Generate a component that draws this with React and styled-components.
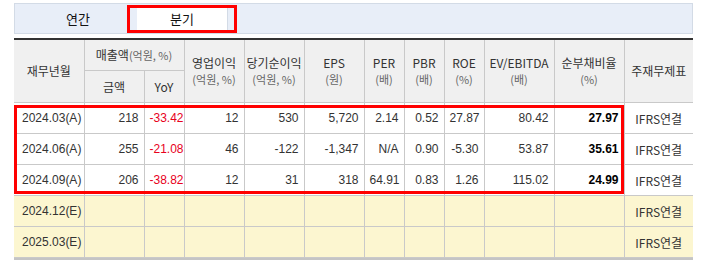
import React from 'react';
import styled, { createGlobalStyle } from 'styled-components';

const GlobalStyle = createGlobalStyle`
body {
    margin: 0;
    background: #fff;
    font-family: "Noto Sans CJK KR", "Liberation Sans", sans-serif;
    color: #333;
}
`;

const Page = styled.div`
    width: 679px;
    padding: 3px 0 0 14px;
`;

const TabBar = styled.div`
    display: flex;
    align-items: center;
    gap: 14px;
    height: 29px;
    padding-left: 18px;
    background: #e8eef8;
    border: 1px solid #d3dbe6;
`;

const Tab = styled.div`
    position: relative;
    width: 90px;
    height: 23px;
    display: flex;
    align-items: center;
    justify-content: center;
    font-size: 13px;
    color: #111;
    background: ${props => props.active ? '#fff' : 'transparent'};
    border-right: ${props => props.active ? '1px solid #d3dbe6' : 'none'};

    &::after {
        content: '';
        display: ${props => props.active ? 'block' : 'none'};
        position: absolute;
        top: -2px;
        bottom: -3px;
        left: -10px;
        right: -10px;
        border: 3px solid #ff0000;
    }
`;

const TableWrap = styled.div`
    position: relative;
    margin-top: 4px;
    border-top: 2px solid #333;
    border-bottom: 2px solid #c4c4c4;
`;

const Table = styled.table`
    width: 679px;
    border-collapse: collapse;
    table-layout: fixed;
`;

const Th = styled.th`
    height: ${props => props.h || 30}px;
    padding: 0;
    background: #f0f0f0;
    border: 1px solid #c9c9c9;
    border-top: none;
    font-weight: normal;
    font-size: 12px;
    line-height: 16px;
    color: #333;
    text-align: center;
    &:first-child { border-left: none; }
    &:last-child { border-right: none; }
`;

const Unit = styled.span`
    display: ${props => props.inline ? 'inline' : 'block'};
    font-size: 11px;
    color: #666;
`;

const Tr = styled.tr`
    background: ${props => props.estimate ? '#fcf6d0' : '#fff'};
`;

const Td = styled.td`
    height: 30px;
    padding: 0 5px;
    border: 1px solid #c9c9c9;
    font-family: "Liberation Sans", "Noto Sans CJK KR", sans-serif;
    font-size: 12px;
    text-align: ${props => props.align || 'right'};
    color: ${props => props.neg ? '#e8001c' : props.strong ? '#000' : '#333'};
    font-weight: ${props => props.strong ? 'bold' : 'normal'};
    white-space: nowrap;
    &:first-child { border-left: none; padding-left: 8px; }
    &:last-child {
        border-right: none;
        font-family: "Noto Sans CJK KR", sans-serif;
    }
`;

const RedBox = styled.div`
    position: absolute;
    left: 0;
    top: 65px;
    width: 610px;
    height: 89px;
    box-sizing: border-box;
    border: 3px solid #ff0000;
    pointer-events: none;
`;

const widths = [70, 60, 40, 60, 60, 60, 40, 40, 40, 70, 70, 69];

const rows = [
    { date: '2024.03(A)', vals: ['218', '-33.42', '12', '530', '5,720', '2.14', '0.52', '27.87', '80.42', '27.97'] },
    { date: '2024.06(A)', vals: ['255', '-21.08', '46', '-122', '-1,347', 'N/A', '0.90', '-5.30', '53.87', '35.61'] },
    { date: '2024.09(A)', vals: ['206', '-38.82', '12', '31', '318', '64.91', '0.83', '1.26', '115.02', '24.99'] },
    { date: '2024.12(E)', vals: Array(10).fill(''), estimate: true },
    { date: '2025.03(E)', vals: Array(10).fill(''), estimate: true },
];

export default function App() {
    return (
        <Page>
            <GlobalStyle />
            <TabBar>
                <Tab>연간</Tab>
                <Tab active>분기</Tab>
            </TabBar>
            <TableWrap>
                <Table>
                    <colgroup>
                        {widths.map((w, i) => <col key={i} style={{ width: w }} />)}
                    </colgroup>
                    <thead>
                        <tr>
                            <Th rowSpan={2}>재무년월</Th>
                            <Th colSpan={2}>매출액<Unit inline>(억원, %)</Unit></Th>
                            <Th rowSpan={2}>영업이익<Unit>(억원, %)</Unit></Th>
                            <Th rowSpan={2}>당기순이익<Unit>(억원, %)</Unit></Th>
                            <Th rowSpan={2}>EPS<Unit>(원)</Unit></Th>
                            <Th rowSpan={2}>PER<Unit>(배)</Unit></Th>
                            <Th rowSpan={2}>PBR<Unit>(배)</Unit></Th>
                            <Th rowSpan={2}>ROE<Unit>(%)</Unit></Th>
                            <Th rowSpan={2}>EV/EBITDA<Unit>(배)</Unit></Th>
                            <Th rowSpan={2}>순부채비율<Unit>(%)</Unit></Th>
                            <Th rowSpan={2}>주재무제표</Th>
                        </tr>
                        <tr>
                            <Th h={31}>금액</Th>
                            <Th h={31}>YoY</Th>
                        </tr>
                    </thead>
                    <tbody>
                        {rows.map((r) => (
                            <Tr key={r.date} estimate={r.estimate}>
                                <Td align="left">{r.date}</Td>
                                {r.vals.map((v, i) => (
                                    <Td key={i} neg={i === 1} strong={i === 9}>{v}</Td>
                                ))}
                                <Td align="center">IFRS연결</Td>
                            </Tr>
                        ))}
                    </tbody>
                </Table>
                <RedBox />
            </TableWrap>
        </Page>
    );
}
